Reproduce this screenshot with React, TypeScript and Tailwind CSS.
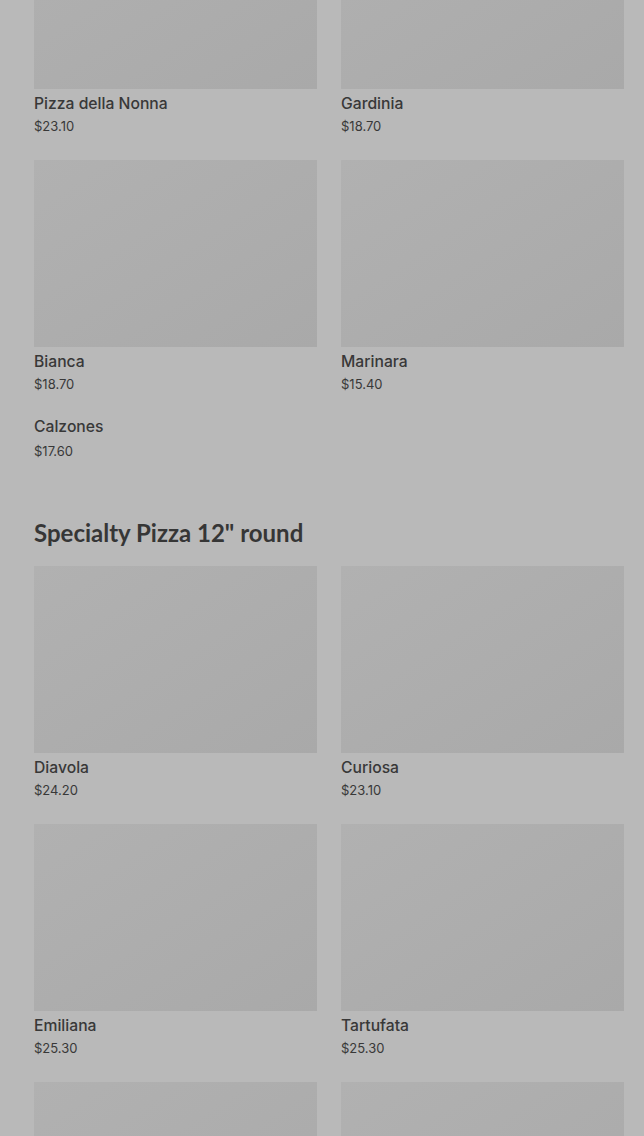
import React from "react";

type Item = { name: string; price: string; image?: boolean };

const top: Item[] = [
  { name: "Pizza della Nonna", price: "$23.10", image: true },
  { name: "Gardinia", price: "$18.70", image: true },
  { name: "Bianca", price: "$18.70", image: true },
  { name: "Marinara", price: "$15.40", image: true },
];

const specialty: Item[] = [
  { name: "Diavola", price: "$24.20", image: true },
  { name: "Curiosa", price: "$23.10", image: true },
  { name: "Emiliana", price: "$25.30", image: true },
  { name: "Tartufata", price: "$25.30", image: true },
  { name: "", price: "", image: true },
  { name: "", price: "", image: true },
];

function Card({ item }: { item: Item }) {
  return (
    <div className="flex flex-col">
      {item.image && (
        <div className="h-[187px] w-full bg-gradient-to-br from-[#b1b1b1] via-[#adadad] to-[#a9a9a9]" />
      )}
      {item.name && (
        <>
          <div className="mt-[2px] text-[15.7px] leading-[25px] font-medium text-[#383838]">
            {item.name}
          </div>
          <div className="text-[13px] leading-[20px] text-[#383838]">{item.price}</div>
        </>
      )}
    </div>
  );
}

export default function App() {
  return (
    <div
      className="min-h-[1136px] w-full overflow-hidden bg-[#b9b9b9]"
      style={{ fontFamily: "Inter, 'Noto Sans', sans-serif" }}
    >
      <div className="-mt-[98px] pl-[34px] pr-[20px]">
        <div className="grid grid-cols-2 gap-x-[24px] gap-y-[24px]">
          {top.map((it, i) => (
            <Card key={i} item={it} />
          ))}
          <div className="-mt-[3px] flex flex-col">
            <div className="text-[15.7px] leading-[24px] font-medium text-[#383838]">Calzones</div>
            <div className="mt-[2px] text-[13px] leading-[20px] text-[#383838]">$17.60</div>
          </div>
        </div>
        <h2
          className="mt-[56px] mb-[17px] text-[24px] leading-[32px] font-bold text-[#363636]"
          style={{ fontFamily: "Lato, 'Open Sans', sans-serif" }}
        >
          Specialty Pizza 12" round
        </h2>
        <div className="grid grid-cols-2 gap-x-[24px] gap-y-[24px]">
          {specialty.map((it, i) => (
            <Card key={i} item={it} />
          ))}
        </div>
      </div>
    </div>
  );
}
